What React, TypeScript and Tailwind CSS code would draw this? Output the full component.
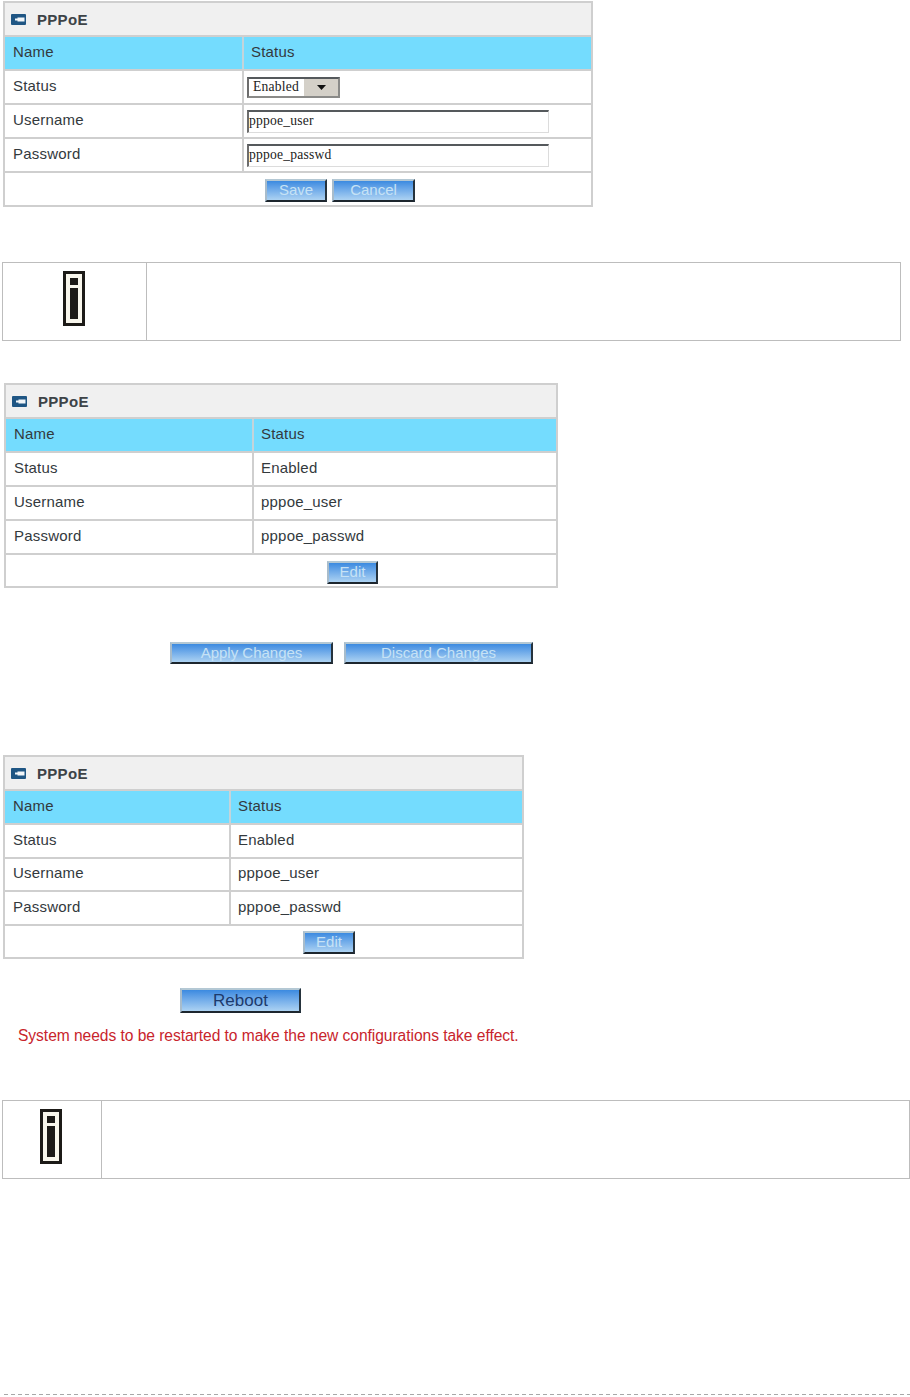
const cellText = "font-['Liberation_Sans',Arial,sans-serif] text-[15px] tracking-[0.2px] text-[#33393d]"

function PlugIcon() {
  return (
    <svg width="15" height="11" viewBox="0 0 15 11" className="shrink-0">
      <rect width="15" height="11" rx="1" fill="#1f5684" />
      <path d="M4 4.5h2.5v-1H13.5v4H6.5v-1H4z" fill="#f2f6f9" />
    </svg>
  )
}

function InfoIcon() {
  return (
    <svg width="22" height="55" viewBox="0 0 22 55" className="block">
      <rect width="22" height="55" fill="#1c1a17" />
      <rect x="3" y="3" width="16" height="49" fill="#f8f6ec" />
      <rect x="7" y="7" width="8" height="7" fill="#1c1a17" />
      <rect x="7" y="17" width="8" height="31" fill="#1c1a17" />
    </svg>
  )
}

function BlueButton({ label, className, dark }: { label: string; className: string; dark?: boolean }) {
  return (
    <button
      className={`flex items-center justify-center border-t-2 border-l-2 border-t-[#b4c8d4] border-l-[#a8bccb] border-r-2 border-b-2 border-r-[#26333d] border-b-[#1d262e] bg-gradient-to-b from-[#3b8ae0] to-[#acd2f2] font-['Liberation_Sans',Arial,sans-serif] ${dark ? 'text-[#1d3a6b] text-[17px]' : 'text-[#c6e2f5] text-[15px]'} ${className}`}
    >
      {label}
    </button>
  )
}

function Row({ cols, height, children, right }: { cols: string; height?: string; children: React.ReactNode; right: React.ReactNode }) {
  return (
    <div className={`grid ${height ?? 'h-8'} ${cols} gap-x-[2px] bg-[#cfcfcf]`}>
      <div className={`flex items-center bg-white pb-[2px] pl-2 ${cellText}`}>{children}</div>
      <div className={`flex items-center bg-white pb-[2px] pl-[7px] ${cellText}`}>{right}</div>
    </div>
  )
}

function PppoeTable({
  width,
  cols,
  status,
  username,
  password,
  actions,
  usernameHeight,
  actionsHeight,
}: {
  width: string
  cols: string
  status: React.ReactNode
  username: React.ReactNode
  password: React.ReactNode
  actions: React.ReactNode
  usernameHeight?: string
  actionsHeight?: string
}) {
  return (
    <div className={`${width} flex flex-col gap-y-[2px] border-2 border-[#cfcfcf] bg-[#cfcfcf]`}>
      <div className="flex h-8 items-center gap-[11px] bg-[#f0f0f0] pl-[6px]">
        <PlugIcon />
        <span className="pt-[2px] font-['Liberation_Sans',Arial,sans-serif] text-[15px] font-bold tracking-[0.3px] text-[#3d4347]">PPPoE</span>
      </div>
      <div className={`grid h-8 ${cols} gap-x-[2px] bg-[#c4d4da]`}>
        <div className={`flex items-center bg-[#74dcfe] pb-[2px] pl-2 ${cellText} text-[#1f4258]`}>Name</div>
        <div className={`flex items-center bg-[#74dcfe] pb-[2px] pl-[7px] ${cellText} text-[#1f4258]`}>Status</div>
      </div>
      <Row cols={cols} right={status}>Status</Row>
      <Row cols={cols} height={usernameHeight} right={username}>Username</Row>
      <Row cols={cols} right={password}>Password</Row>
      <div className={`flex ${actionsHeight ?? 'h-8'} items-center bg-white`}>{actions}</div>
    </div>
  )
}

function TextBox({ value }: { value: string }) {
  return (
    <div className="flex h-[23px] w-[302px] items-center border-t-2 border-l-2 border-t-[#55595c] border-l-[#6c6c6c] border-r border-b border-r-[#dcdcdc] border-b-[#dcdcdc] font-['Liberation_Serif','Times_New_Roman',serif] text-[13.6px] text-[#222]">
      {value}
    </div>
  )
}

function Note({ cols }: { cols: string }) {
  return (
    <div className={`ml-[2px] grid h-[79px] ${cols} border border-[#bdbdbd]`}>
      <div className="flex items-center justify-center border-r border-[#bdbdbd] pb-[6px] pr-[2px]">
        <InfoIcon />
      </div>
      <div />
    </div>
  )
}

export default function App() {
  return (
    <div className="relative h-[1397px] w-[910px] overflow-hidden bg-white pt-px">
      <div className="ml-[3px]">
        <PppoeTable
          width="w-[590px]"
          cols="grid-cols-[237px_1fr]"
          status={
            <div className="ml-[-4px] mt-[2px] flex h-[21px] w-[93px] items-center border-2 border-t-[#55595c] border-l-[#6c6c6c] border-r-[#8a8a88] border-b-[#8a8a88] font-['Liberation_Serif','Times_New_Roman',serif] text-[13.6px] text-[#222]">
              <span className="flex-1 pl-1">Enabled</span>
              <span className="flex h-full w-[34px] items-center justify-center bg-[#d4d0c8]">
                <svg width="9" height="5" viewBox="0 0 9 5"><path d="M0 0h9L4.5 5z" fill="#111" /></svg>
              </span>
            </div>
          }
          username={<div className="ml-[-4px] mt-[2px]"><TextBox value="pppoe_user" /></div>}
          password={<div className="ml-[-4px] mt-[2px]"><TextBox value="pppoe_passwd" /></div>}
          actions={
            <div className="ml-[260px] mt-[3px] flex gap-[5px]">
              <BlueButton label="Save" className="h-[23px] w-[62px]" />
              <BlueButton label="Cancel" className="h-[23px] w-[83px]" />
            </div>
          }
        />
      </div>

      <div className="mt-[55px]">
        <Note cols="grid-cols-[144px_1fr] w-[899px]" />
      </div>

      <div className="ml-[4px] mt-[42px]">
        <PppoeTable
          width="w-[554px]"
          cols="grid-cols-[246px_1fr]"
          status="Enabled"
          username="pppoe_user"
          password="pppoe_passwd"
          actionsHeight="h-[31px]"
          actions={
            <div className="ml-[321px] mt-[3px]">
              <BlueButton label="Edit" className="h-[23px] w-[51px]" />
            </div>
          }
        />
      </div>

      <div className="ml-[170px] mt-[54px] flex gap-[11px]">
        <BlueButton label="Apply Changes" className="h-[22px] w-[163px]" />
        <BlueButton label="Discard Changes" className="h-[22px] w-[189px]" />
      </div>

      <div className="ml-[3px] mt-[91px]">
        <PppoeTable
          width="w-[521px]"
          cols="grid-cols-[224px_1fr]"
          status="Enabled"
          username="pppoe_user"
          password="pppoe_passwd"
          usernameHeight="h-[31px]"
          actionsHeight="h-[31px]"
          actions={
            <div className="ml-[298px] mt-[2px]">
              <BlueButton label="Edit" className="h-[23px] w-[52px]" />
            </div>
          }
        />
      </div>

      <div className="ml-[180px] mt-[29px]">
        <BlueButton label="Reboot" dark className="h-[25px] w-[121px]" />
      </div>
      <div className="ml-[18px] mt-[13px] font-['Liberation_Sans',Arial,sans-serif] text-[15.6px] leading-[20px] tracking-[-0.05px] text-[#c8242c]">
        System needs to be restarted to make the new configurations take effect.
      </div>

      <div className="mt-[54px]">
        <Note cols="grid-cols-[99px_1fr] w-[908px]" />
      </div>

      <div className="absolute bottom-[2px] left-[4px] h-px w-[906px] bg-[repeating-linear-gradient(90deg,#a8a8a8_0_4px,transparent_4px_7px)]" />
    </div>
  )
}
